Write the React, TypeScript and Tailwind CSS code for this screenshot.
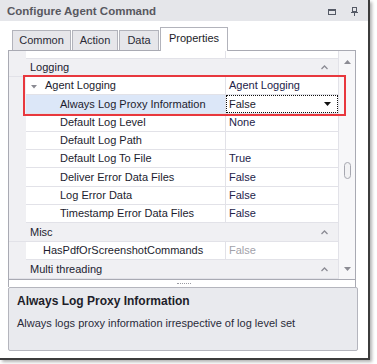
import React from "react";

type Row =
  | { kind: "cat"; label: string; h: string }
  | {
      kind: "prop";
      label: string;
      value: string;
      pad: string;
      h: string;
      selected?: boolean;
      disabled?: boolean;
      expander?: boolean;
    };

const rows: Row[] = [
  { kind: "prop", label: "", value: "", pad: "pl-[34px]", h: "h-[8px]" },
  { kind: "cat", label: "Logging", h: "h-[18px]" },
  { kind: "prop", label: "Agent Logging", value: "Agent Logging", pad: "pl-[19px]", h: "h-[18px]", expander: true },
  { kind: "prop", label: "Always Log Proxy Information", value: "False", pad: "pl-[34px]", h: "h-[19px]", selected: true },
  { kind: "prop", label: "Default Log Level", value: "None", pad: "pl-[34px]", h: "h-[18px]" },
  { kind: "prop", label: "Default Log Path", value: "", pad: "pl-[34px]", h: "h-[18px]" },
  { kind: "prop", label: "Default Log To File", value: "True", pad: "pl-[34px]", h: "h-[18px]" },
  { kind: "prop", label: "Deliver Error Data Files", value: "False", pad: "pl-[34px]", h: "h-[19px]" },
  { kind: "prop", label: "Log Error Data", value: "False", pad: "pl-[34px]", h: "h-[18px]" },
  { kind: "prop", label: "Timestamp Error Data Files", value: "False", pad: "pl-[34px]", h: "h-[18px]" },
  { kind: "cat", label: "Misc", h: "h-[19px]" },
  { kind: "prop", label: "HasPdfOrScreenshotCommands", value: "False", pad: "pl-[17px]", h: "h-[18px]", disabled: true },
  { kind: "cat", label: "Multi threading", h: "h-[19px]" },
];

function Chevron() {
  return (
    <svg width="7" height="5" viewBox="0 0 7 5" className="block">
      <polyline points="0.5,4 3.5,1 6.5,4" fill="none" stroke="#8c8c94" strokeWidth="1.3" />
    </svg>
  );
}

function GridRow({ row }: { row: Row }) {
  if (row.kind === "cat") {
    return (
      <div className={`${row.h} flex items-center bg-[#f0f0f3] border-b border-[#e2e2e8] pl-[21px] pr-[10px] text-[#222230]`}>
        <span className="flex-1">{row.label}</span>
        <Chevron />
      </div>
    );
  }
  return (
    <div className={`${row.h} flex`}>
      <div className="w-[17px] bg-[#f0f0f3]" />
      <div className="flex-1 flex border-b border-[#e2e2e8]">
        <div
          className={`w-[200px] border-r border-[#e2e2e8] flex items-center ${row.pad} ${
            row.selected ? "bg-[#dce7f8]" : "bg-white"
          } text-[#1c1c2e] relative whitespace-nowrap overflow-hidden`}
        >
          {row.expander && (
            <svg width="6" height="4" viewBox="0 0 6 4" className="absolute left-[5px] top-[8px]">
              <polygon points="0,0 6,0 3,3.5" fill="#8a8a92" />
            </svg>
          )}
          {row.label}
        </div>
        {row.selected ? (
          <div className="flex-1 bg-white">
            <div className="h-full border border-dotted border-[#111] flex items-center justify-between pl-[2px] pr-[6px] text-[#1c1c2e]">
              <span>{row.value}</span>
              <svg width="7" height="4" viewBox="0 0 7 4">
                <polygon points="0,0 7,0 3.5,4" fill="#111" />
              </svg>
            </div>
          </div>
        ) : (
          <div
            className={`flex-1 bg-white flex items-center pl-[3px] ${
              row.disabled ? "text-[#a2a2aa]" : "text-[#23234a]"
            }`}
          >
            {row.value}
          </div>
        )}
      </div>
    </div>
  );
}

export default function App() {
  return (
    <div className="w-[377px] h-[364px] bg-white relative overflow-hidden font-['Liberation_Sans',Arial,sans-serif] text-[11px] leading-none">
      <div className="w-[370px] h-[360px] flex flex-col bg-white border-r-2 border-b-2 border-[#3c3c3c] shadow-[2px_2px_3px_rgba(0,0,0,0.3)]">
        {/* Title bar */}
        <div className="h-[21px] bg-[#e5e6ea] flex items-center pl-[7px] pr-[10px] pt-[2px]">
          <span className="flex-1 font-bold text-[11.5px] text-[#58585f]">Configure Agent Command</span>
          <svg width="8" height="6" viewBox="0 0 8 6" className="mr-[15px]">
            <rect x="0.5" y="0.5" width="7" height="5" fill="none" stroke="#555a66" strokeWidth="1" />
            <rect x="0" y="0" width="8" height="2" fill="#555a66" />
          </svg>
          <svg width="7" height="9" viewBox="0 0 7 9">
            <rect x="1.5" y="0.5" width="4" height="4" fill="none" stroke="#555a66" strokeWidth="1" />
            <rect x="0" y="5" width="7" height="1" fill="#555a66" />
            <rect x="3" y="6" width="1" height="3" fill="#555a66" />
          </svg>
        </div>

        {/* Tabs */}
        <div className="h-[29px] flex items-end pl-[12px] gap-[1px] text-[11px] text-[#2a2a36]">
          <div className="w-[59px] h-[20px] bg-[#e6e6ea] border border-b-0 border-[#b2b3bb] flex items-center justify-center">Common</div>
          <div className="w-[46px] h-[20px] bg-[#e6e6ea] border border-b-0 border-[#b2b3bb] flex items-center justify-center">Action</div>
          <div className="w-[40px] h-[20px] bg-[#e6e6ea] border border-b-0 border-[#b2b3bb] flex items-center justify-center">Data</div>
          <div className="w-[68px] h-[24px] -mb-[1px] bg-white border border-b-0 border-[#b2b3bb] flex items-center justify-center relative z-10 pb-[2px] text-[#1c1c28]">Properties</div>
        </div>

        {/* Tab page */}
        <div className="ml-[8px] w-[348px] flex flex-col">
          <div className="h-[230px] border border-[#a9aab3] flex">
            <div className="w-[329px] flex flex-col">
              {rows.map((r, i) => (
                <GridRow key={i} row={r} />
              ))}
            </div>
            <div className="flex-1 border-l border-[#e2e2e8] bg-[#f7f7f9] flex flex-col items-center">
              <svg width="7" height="4" viewBox="0 0 7 4" className="mt-[9px]">
                <polygon points="0,4 7,4 3.5,0" fill="#8c8c94" />
              </svg>
              <div className="mt-[98px] w-[7px] h-[17px] rounded-full border border-[#a6a7b0] bg-[#f2f2f4]" />
              <div className="flex-1" />
              <svg width="7" height="4" viewBox="0 0 7 4" className="mb-[8px]">
                <polygon points="0,0 7,0 3.5,4" fill="#8c8c94" />
              </svg>
            </div>
          </div>
          <div className="h-[7px] border-l border-r border-[#a9aab3] flex justify-center pt-[3px]">
            <div className="w-[14px] h-[1px] border-t border-dotted border-[#9a9aa2] ml-[4px]" />
          </div>
          <div className="h-[64px] w-[350px] border border-[#b4b5bd] rounded-[2px] bg-[#e9eaee] pl-[8px] pt-[6px]">
            <div className="font-bold text-[12px] leading-[14px] text-[#1e1e2a]">Always Log Proxy Information</div>
            <div className="mt-[8px] text-[11px] leading-[14px] text-[#2a2a3a]">
              Always logs proxy information irrespective of log level set
            </div>
          </div>
        </div>
      </div>

      {/* Red annotation box */}
      <div className="absolute left-[23px] top-[75px] w-[323px] h-[41px] border-2 border-[#e8383e]" />
    </div>
  );
}
